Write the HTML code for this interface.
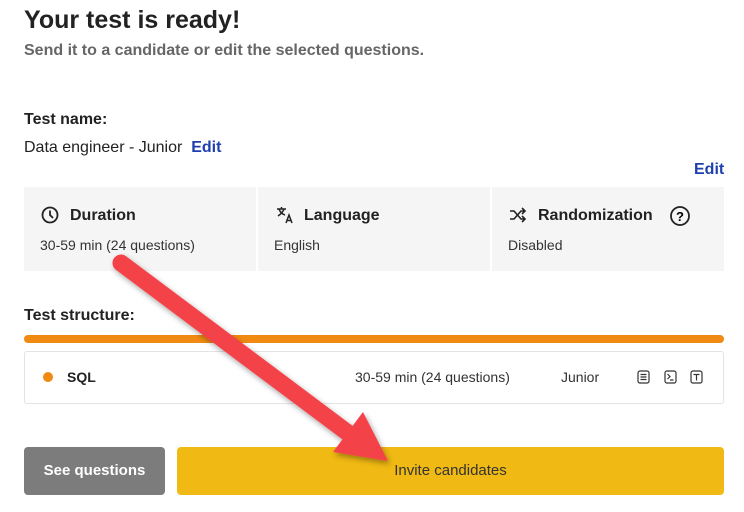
<!DOCTYPE html><html><head><style>
body{margin:0;width:744px;height:512px;background:#fff;font-family:"Liberation Sans",sans-serif;color:#222;position:relative;overflow:hidden}
.a{position:absolute}
.card{position:absolute;top:187px;height:84px;background:#f5f5f5}
.t{font-weight:bold;font-size:16px;color:#222}
.s{font-size:14px;color:#333}
</style></head><body>
<div class="a" style="left:24px;top:6px;font-size:25px;font-weight:bold;color:#222">Your test is ready!</div>
<div class="a" style="left:24px;top:42px;font-size:16px;font-weight:bold;color:#666">Send it to a candidate or edit the selected questions.</div>
<div class="a t" style="left:24px;top:111px;font-size:16px">Test name:</div>
<div class="a" style="left:24px;top:139px;font-size:16px;color:#222">Data engineer - Junior &nbsp;<b style="color:#1f3fae">Edit</b></div>
<div class="a" style="left:694px;top:161px;font-size:16px;font-weight:bold;color:#1f3fae">Edit</div>
<div class="card" style="left:24px;width:232px"></div>
<div class="card" style="left:258px;width:232px"></div>
<div class="card" style="left:492px;width:232px"></div>
<svg class="a" style="left:40px;top:205px" width="20" height="20" viewBox="0 0 20 20"><circle cx="10" cy="10" r="7.5" fill="none" stroke="#222" stroke-width="1.8"/><path d="M10 5.5V10l3 3" fill="none" stroke="#222" stroke-width="1.8"/></svg>
<div class="a t" style="left:70px;top:207px">Duration</div>
<div class="a s" style="left:40px;top:237px">30-59 min (24 questions)</div>
<svg class="a" style="left:275px;top:205px" width="20" height="20" fill="none" stroke="#222" stroke-width="1.5"><path d="M2 4h9M6.5 2v2M4 4c1 3 3 5 6 6M9 4c-1 3-3 5-6 7"/><path d="M11 18l3-8 3 8M12 15.5h4"/></svg>
<div class="a t" style="left:304px;top:207px">Language</div>
<div class="a s" style="left:274px;top:237px">English</div>
<svg class="a" style="left:508px;top:206px" width="20" height="18" fill="none" stroke="#222" stroke-width="1.6"><path d="M2 5h4l7 8h4M2 13h4l7-8h4M14 2l3 3-3 3M14 10l3 3-3 3"/></svg>
<div class="a t" style="left:538px;top:207px">Randomization</div>
<svg class="a" style="left:669px;top:205px" width="22" height="22"><circle cx="11" cy="11" r="9" fill="none" stroke="#222" stroke-width="1.8"/><text x="11" y="16" font-size="13" font-weight="bold" text-anchor="middle" font-family="Liberation Sans">?</text></svg>
<div class="a s" style="left:508px;top:237px">Disabled</div>
<div class="a t" style="left:24px;top:307px">Test structure:</div>
<div class="a" style="left:24px;top:335px;width:700px;height:8px;background:#f08a12;border-radius:4px"></div>
<div class="a" style="left:24px;top:351px;width:698px;height:51px;border:1px solid #e3e3e3;border-radius:3px"></div>
<div class="a" style="left:43px;top:372px;width:10px;height:10px;border-radius:50%;background:#f08a12"></div>
<div class="a" style="left:67px;top:369px;font-size:14px;font-weight:bold">SQL</div>
<div class="a s" style="left:355px;top:369px">30-59 min (24 questions)</div>
<div class="a s" style="left:561px;top:369px">Junior</div>
<svg class="a" style="left:637px;top:370px" width="70" height="14" fill="none" stroke="#333" stroke-width="1.2"><rect x="1" y="1" width="11" height="12" rx="2"/><path d="M3.5 4.5h6M3.5 7h6M3.5 9.5h6"/><rect x="28" y="1" width="11" height="12" rx="2"/><path d="M30.5 4l2.5 2.5-2.5 2.5M33 10h3.5"/><rect x="54" y="1" width="11" height="12" rx="2"/><path d="M56.5 4.5h6M59.5 4.5v6"/></svg>
<div class="a" style="left:24px;top:447px;width:141px;height:48px;background:#7c7c7c;border-radius:4px;color:#fff;font-weight:bold;font-size:15px;text-align:center;line-height:48px">See questions</div>
<div class="a" style="left:177px;top:447px;width:547px;height:48px;background:#f0b913;border-radius:4px;color:#333;font-size:15px;text-align:center;line-height:48px">Invite candidates</div>
<svg class="a" style="left:0;top:0" width="744" height="512"><defs><filter id="f"><feDropShadow dx="2" dy="3" stdDeviation="3" flood-opacity=".35"/></filter></defs>
<g filter="url(#f)"><path d="M121 263 L352 436" stroke="#f44249" stroke-width="17" stroke-linecap="round"/><path d="M388 461 L333 452 L363 412 Z" fill="#f44249"/></g></svg>
</body></html>
